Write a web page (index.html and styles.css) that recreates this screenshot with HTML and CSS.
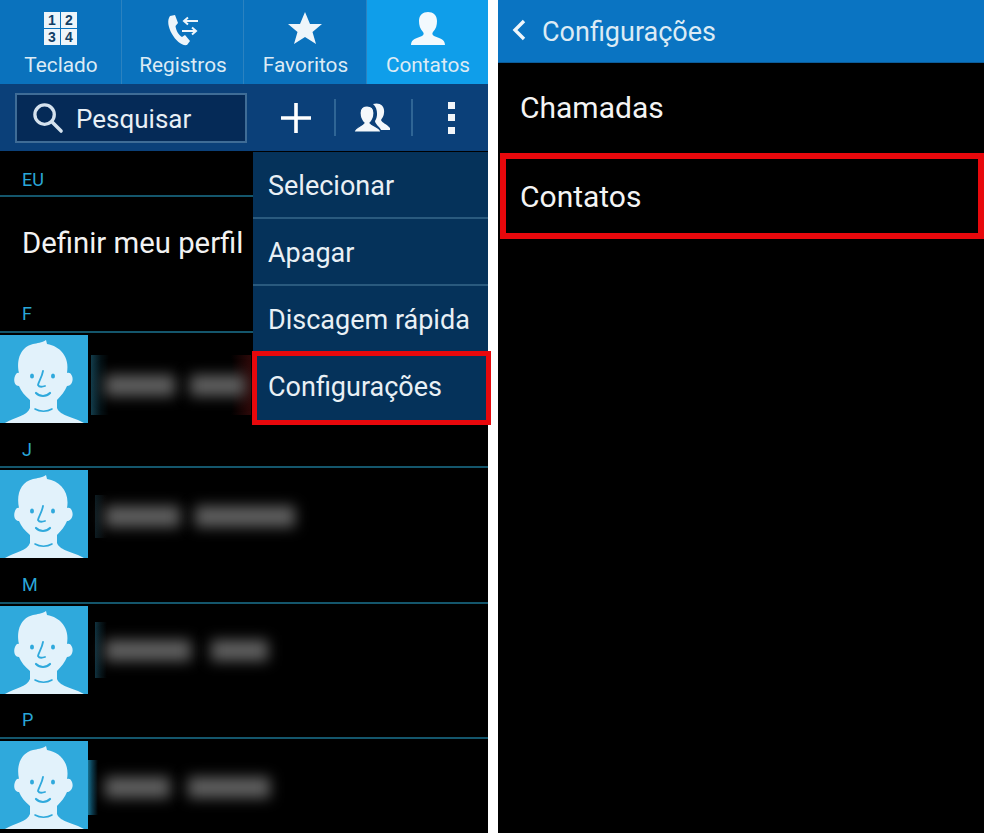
FILE: index.html
```html
<!DOCTYPE html>
<html lang="pt-BR">
<head>
<meta charset="utf-8">
<title>Configurações de contatos</title>
<link rel="stylesheet" href="styles.css">
</head>
<body>
<svg class="defs" width="0" height="0" aria-hidden="true">
  <symbol id="avatar" viewBox="0 0 88 88">
    <rect width="88" height="88" fill="#2fa9dc"/>
    <path fill="#e2f2fb" d="M5 88 C15 82 27 81 30 73 L30 65 C25 61 21 56 19 51 C15 51 13 46 15 41 C16 38 18 37 19 38 C16 24 21 12 33 9 C37 8 42 8 46 5 L47 9 C60 11 70 22 67 38 C69 37 71 38 72 41 C74 46 71 51 67 51 C65 56 61 61 57 65 L57 73 C60 81 74 82 84 88 Z"/>
    <ellipse cx="32" cy="41" rx="2" ry="2.600" fill="#2fa9dc"/>
    <ellipse cx="53" cy="41" rx="2" ry="2.600" fill="#2fa9dc"/>
    <path fill="none" stroke="#2fa9dc" stroke-width="1.800" stroke-linecap="round" d="M43 36 C42 42 39 46 38 50 C39 52 42 52 45 51"/>
    <path fill="none" stroke="#2fa9dc" stroke-width="2.200" stroke-linecap="round" d="M36 58 C40 62 46 62 50 58"/>
    <path fill="none" stroke="#2fa9dc" stroke-width="1.600" stroke-linecap="round" d="M35 74 C40 77 47 77 52 74"/>
  </symbol>
</svg>

<main class="screens">
  <section class="phone phone-left">
    <nav class="tabs">
      <div class="tab">
        <div class="keypad">
          <span>1</span><span>2</span><span>3</span><span>4</span>
        </div>
        <span class="tab-label">Teclado</span>
      </div>
      <div class="tab">
        <svg class="tab-icon" viewBox="0 0 40 36">
          <path fill="#eef5fa" d="M7 5 L12 4 L15 12 L12.500 15 C13 20 16 24 19 26 L22 24 L27 30 L24 34 C19 35 13 30 9 23 C5 16 4 9 7 5 Z"/>
          <path fill="none" stroke="#eef5fa" stroke-width="2" d="M21 10 H35 M25 6.500 L21 10 L25 13.500 M19 20 H33 M29 16.500 L33 20 L29 23.500"/>
        </svg>
        <span class="tab-label">Registros</span>
      </div>
      <div class="tab">
        <svg class="tab-icon" viewBox="0 0 40 36">
          <path fill="#eef5fa" d="M20 1 L25 13 L37 13 L27.500 21 L31 33 L20 26 L9 33 L12.500 21 L3 13 L15 13 Z"/>
        </svg>
        <span class="tab-label">Favoritos</span>
      </div>
      <div class="tab tab-active">
        <svg class="tab-icon" viewBox="0 0 40 36">
          <path fill="#f2f9fd" d="M3 34 C3 28 9 27 14 25 C16 24 16 22 15 21 C12 18 11 14 11 10 C11 4 15 1 20 1 C25 1 29 4 29 10 C29 14 28 18 25 21 C24 22 24 24 26 25 C31 27 37 28 37 34 Z"/>
        </svg>
        <span class="tab-label">Contatos</span>
      </div>
    </nav>

    <div class="toolbar">
      <div class="search">
        <svg class="search-icon" viewBox="0 0 34 34">
          <circle cx="14" cy="14" r="10" fill="none" stroke="#d5e2ee" stroke-width="3.400"/>
          <path stroke="#d5e2ee" stroke-width="3.600" stroke-linecap="round" d="M22 22 L31 31"/>
        </svg>
        <span class="search-text">Pesquisar</span>
      </div>
      <div class="actions">
        <div class="action action-add">
          <svg viewBox="0 0 32 32" class="action-icon"><path stroke="#fff" stroke-width="3.600" d="M16 1 V31 M1 16 H31"/></svg>
        </div>
        <div class="action action-group">
          <svg viewBox="0 0 36 30" class="action-icon group-icon">
            <path fill="#f4f8fb" d="M19 1 C26 -1 31 3 30 10 C30 13 28 15 27 17 C28 20 33 21 36 25 L36 27 L27 27 C25 23 21 21 21 18 C24 14 24 5 19 1 Z"/>
            <path fill="#f4f8fb" stroke="#0b4079" stroke-width="1.200" d="M0 29 C1 24 8 23 10 20 C7 17 6 13 6 10 C6 5 9 3 13 3 C17 3 20 5 20 10 C20 13 19 17 16 20 C18 23 26 24 27 29 Z"/>
          </svg>
        </div>
        <div class="action action-more">
          <span class="dot"></span><span class="dot"></span><span class="dot"></span>
        </div>
      </div>
    </div>

    <div class="contacts">
      <h2 class="section-label label-eu">EU</h2>
      <div class="profile">Definir meu perfil</div>

      <h2 class="section-label label-f">F</h2>
      <div class="contact">
        <svg class="avatar"><use href="#avatar"/></svg>
        <div class="blur-name blur-f"><i class="blob w70"></i><i class="blob w55"></i></div>
      </div>

      <h2 class="section-label label-j">J</h2>
      <div class="contact">
        <svg class="avatar"><use href="#avatar"/></svg>
        <div class="blur-name blur-j"><i class="blob w75"></i><i class="blob w100"></i></div>
      </div>

      <h2 class="section-label label-m">M</h2>
      <div class="contact">
        <svg class="avatar"><use href="#avatar"/></svg>
        <div class="blur-name blur-m"><i class="blob w86"></i><i class="blob w57"></i></div>
      </div>

      <h2 class="section-label label-p">P</h2>
      <div class="contact">
        <svg class="avatar"><use href="#avatar"/></svg>
        <div class="blur-name blur-p"><i class="blob w65"></i><i class="blob w82"></i></div>
      </div>
    </div>

    <ul class="menu">
      <li class="menu-item">Selecionar</li>
      <li class="menu-item">Apagar</li>
      <li class="menu-item">Discagem rápida</li>
      <li class="menu-item menu-item-last">Configurações</li>
    </ul>
    <div class="highlight highlight-menu"></div>
  </section>

  <section class="phone phone-right">
    <header class="settings-header">
      <svg class="back" viewBox="0 0 14 22"><path fill="none" stroke="#eef6fb" stroke-width="3.400" d="M12 2 L3 11 L12 20"/></svg>
      <span class="settings-title">Configurações</span>
    </header>
    <div class="settings-item">Chamadas</div>
    <div class="settings-item">Contatos</div>
    <div class="highlight highlight-settings"></div>
  </section>
</main>
</body>
</html>
```
FILE: styles.css
```css
* { box-sizing: border-box; }
html, body { margin: 0; padding: 0; background: #fff; }
body { font-family: Roboto, "Liberation Sans", sans-serif; overflow: hidden; }
.defs { position: absolute; }
.screens { display: flex; gap: 10px; width: 984px; height: 833px; }
.phone { position: relative; background: #000; height: 833px; overflow: visible; }
.phone-left { width: 488px; flex: none; }
.phone-right { flex: 1; min-width: 0; }

/* tabs */
.tabs { display: grid; grid-template-columns: 122px 122px 123px 121px; height: 84px; background: #0a72bd; }
.tab { display: flex; flex-direction: column; align-items: center; border-right: 1px solid #2b82c0; padding-top: 11px; }
.tab:last-child { border-right: 0; }
.tab-active { background: #0f9eea; }
.tab-icon { width: 40px; height: 36px; display: block; }
.tab-label { font-size: 20.800px; line-height: 24px; margin-top: 6px; margin-left: 1px; color: #dcebf5; white-space: nowrap; }
.keypad { display: grid; grid-template-columns: 16px 16px; gap: 1px; width: 33px; height: 33px; grid-auto-rows: 16px; margin: 1px 0 2px; }
.keypad span { background: #eef5fa; color: #123f66; font: 700 14px/16px "Liberation Sans", sans-serif; text-align: center; }

/* toolbar */
.toolbar { height: 67px; background: #0b4079; display: flex; align-items: center; padding: 0 0 0 15px; }
.search { width: 232px; flex: none; height: 50px; background: #052a57; border: 2px solid #3f6c96; display: flex; align-items: center; padding-left: 14px; }
.search-icon { width: 33px; height: 33px; flex: none; }
.search-text { font-size: 26px; color: #e8eff5; margin: 2px 0 0 12px; }
.actions { display: flex; align-items: center; margin-left: 10px; flex: none; }
.action { height: 37px; display: flex; align-items: center; justify-content: center; flex: none; }
.action-add { width: 79px; border-right: 2px solid #2f6595; }
.action-group { width: 77px; padding-right: 3px; border-right: 2px solid #2f6595; }
.action-more { width: 76px; flex-direction: column; gap: 5.500px; }
.action-icon { width: 32px; height: 32px; }
.group-icon { width: 36px; height: 30px; }
.dot { width: 7px; height: 7px; background: #f1f5f9; flex: none; }

/* contacts */
.contacts { display: flex; flex-direction: column; }
.section-label { margin: 0; font-size: 18px; font-weight: 400; line-height: 22px; color: #2aa7d8; padding-left: 22px; border-bottom: 2px solid #14566c; }
.label-eu { height: 46px; padding-top: 18px; }
.profile { height: 90px; color: #f2f2f2; font-size: 29.300px; line-height: 92px; padding-left: 22px; white-space: nowrap; }
.label-f { height: 46px; padding-top: 16px; }
.label-j { height: 46px; padding-top: 17px; }
.label-m { height: 47px; padding-top: 17px; }
.label-p { height: 46px; padding-top: 16px; }
.contact { height: 89px; display: flex; align-items: flex-start; padding-top: 2px; }
.avatar { width: 88px; height: 88px; flex: none; display: block; }

/* blurred names: redacted in the source image */
.blur-name { display: flex; align-items: center; flex: none; }
.blob { display: block; height: 21px; background: #606060; filter: blur(7px); flex: none; }
.w55 { width: 55px; }
.w57 { width: 57px; }
.w65 { width: 65px; }
.w70 { width: 70px; }
.w75 { width: 75px; }
.w82 { width: 82px; }
.w86 { width: 86px; }
.w100 { width: 100px; }
.blur-f { width: 160px; height: 60px; margin: 20px 0 0 3px; padding-left: 14px; gap: 15px; background: linear-gradient(90deg, #123c4b 0, #041014 10px, #000 18px, #000 140px, #2a0808 158px); }
.blur-j { height: 43px; margin: 25px 0 0 7px; padding-left: 10px; gap: 15px; background: linear-gradient(90deg, #0d1c22 0, #050505 10px, #000 14px); }
.blur-m { height: 56px; margin: 16px 0 0 7px; padding-left: 10px; gap: 20px; background: linear-gradient(90deg, #10323f 0, #071419 6px, #000 12px); }
.blur-p { height: 55px; margin: 19px 0 0 0; padding-left: 17px; gap: 18px; background: linear-gradient(90deg, #17708f 0, #0b3c50 4px, #000 10px); }

/* overflow menu */
.menu { position: absolute; left: 253px; top: 152px; width: 235px; margin: 0; padding: 0; list-style: none; background: #05325a; }
.menu-item { height: 67px; color: #e9f0f5; font-size: 27px; line-height: 68px; padding-left: 15px; border-bottom: 2px solid #2a5a7e; white-space: nowrap; }
.menu-item-last { height: 68px; border-bottom: 0; }

/* red call-outs */
.highlight { position: absolute; border-style: solid; border-color: #e8080c; }
.highlight-menu { left: 252px; top: 351px; width: 239px; height: 74px; border-width: 5px; }
.highlight-settings { left: 2px; top: 153px; right: 0; height: 86px; border-width: 6px; }

/* right screen */
.settings-header { height: 63px; background: #0a74c2; display: flex; align-items: center; padding-left: 14px; border-bottom: 1px solid #0c5c99; }
.back { width: 14px; height: 22px; flex: none; margin-top: -2px; }
.settings-title { font-size: 27px; color: #dcebf5; margin-left: 16px; margin-top: 1px; white-space: nowrap; }
.settings-item { height: 89px; line-height: 89px; color: #f4f4f4; font-size: 30px; padding-left: 22px; }
```
